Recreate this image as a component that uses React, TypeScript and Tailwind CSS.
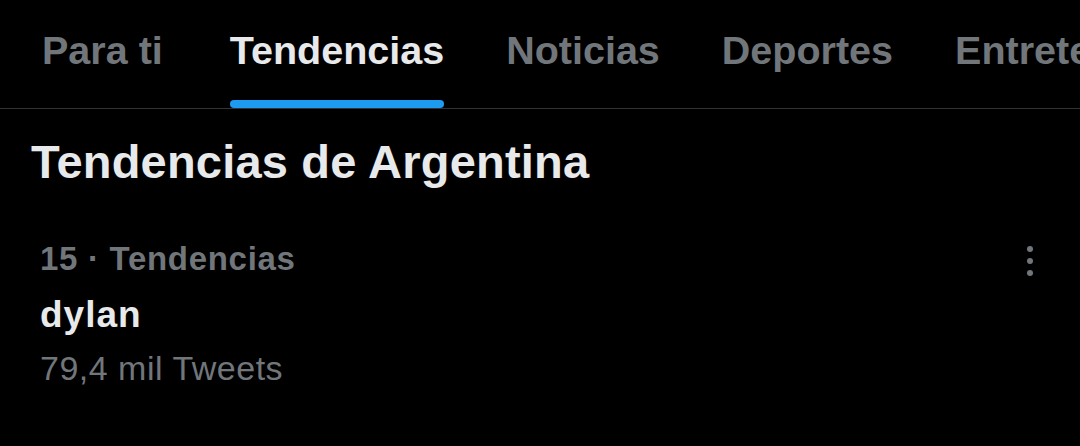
import React from "react";

const tabs = ["Para ti", "Tendencias", "Noticias", "Deportes", "Entretenimiento"];

const Dots: React.FC = () => (
  <svg width="6" height="30" viewBox="0 0 6 30" className="text-[#71767b]">
    <circle cx="3" cy="3" r="3" fill="currentColor" />
    <circle cx="3" cy="15" r="3" fill="currentColor" />
    <circle cx="3" cy="27" r="3" fill="currentColor" />
  </svg>
);

export default function App() {
  const active = 1;
  return (
    <div className="w-[1080px] h-[446px] overflow-hidden bg-black font-['Liberation_Sans',Arial,sans-serif]">
      {/* top tabs, last one runs off the edge */}
      <div className="flex h-[109px] border-b border-[#2f3336] pl-[11px] whitespace-nowrap overflow-hidden">
        {tabs.map((t, i) => (
          <div
            key={t}
            className={`flex flex-col items-center shrink-0 px-[31px] ${i === 0 ? "pr-[36px]" : ""}`}
          >
            <span
              className={`mt-[30px] text-[39.5px] leading-[40px] font-bold ${
                i === active ? "text-[#e7e9ea]" : "text-[#71767b]"
              }`}
            >
              {t}
            </span>
            {i === active && (
              <div className="mt-auto h-2 w-full rounded-full bg-[#1d9bf0]" />
            )}
          </div>
        ))}
      </div>

      <h2 className="mt-[29px] ml-[31px] text-[47px] leading-[47px] tracking-[0.2px] font-bold text-[#e7e9ea]">
        Tendencias de Argentina
      </h2>

      {/* trend item */}
      <div className="flex justify-between pl-[40px] pr-[47px] mt-[57px]">
        <div>
          <div className="text-[33px] leading-[33px] tracking-[0.7px] font-bold text-[#71767b]">
            15 · Tendencias
          </div>
          <div className="mt-[21px] text-[37px] leading-[37px] tracking-[1px] font-bold text-[#e7e9ea]">
            dylan
          </div>
          <div className="mt-[18px] text-[34px] leading-[34px] tracking-[0.5px] text-[#71767b]">
            79,4 mil Tweets
          </div>
        </div>
        <div className="pt-[4px]">
          <Dots />
        </div>
      </div>
    </div>
  );
}
